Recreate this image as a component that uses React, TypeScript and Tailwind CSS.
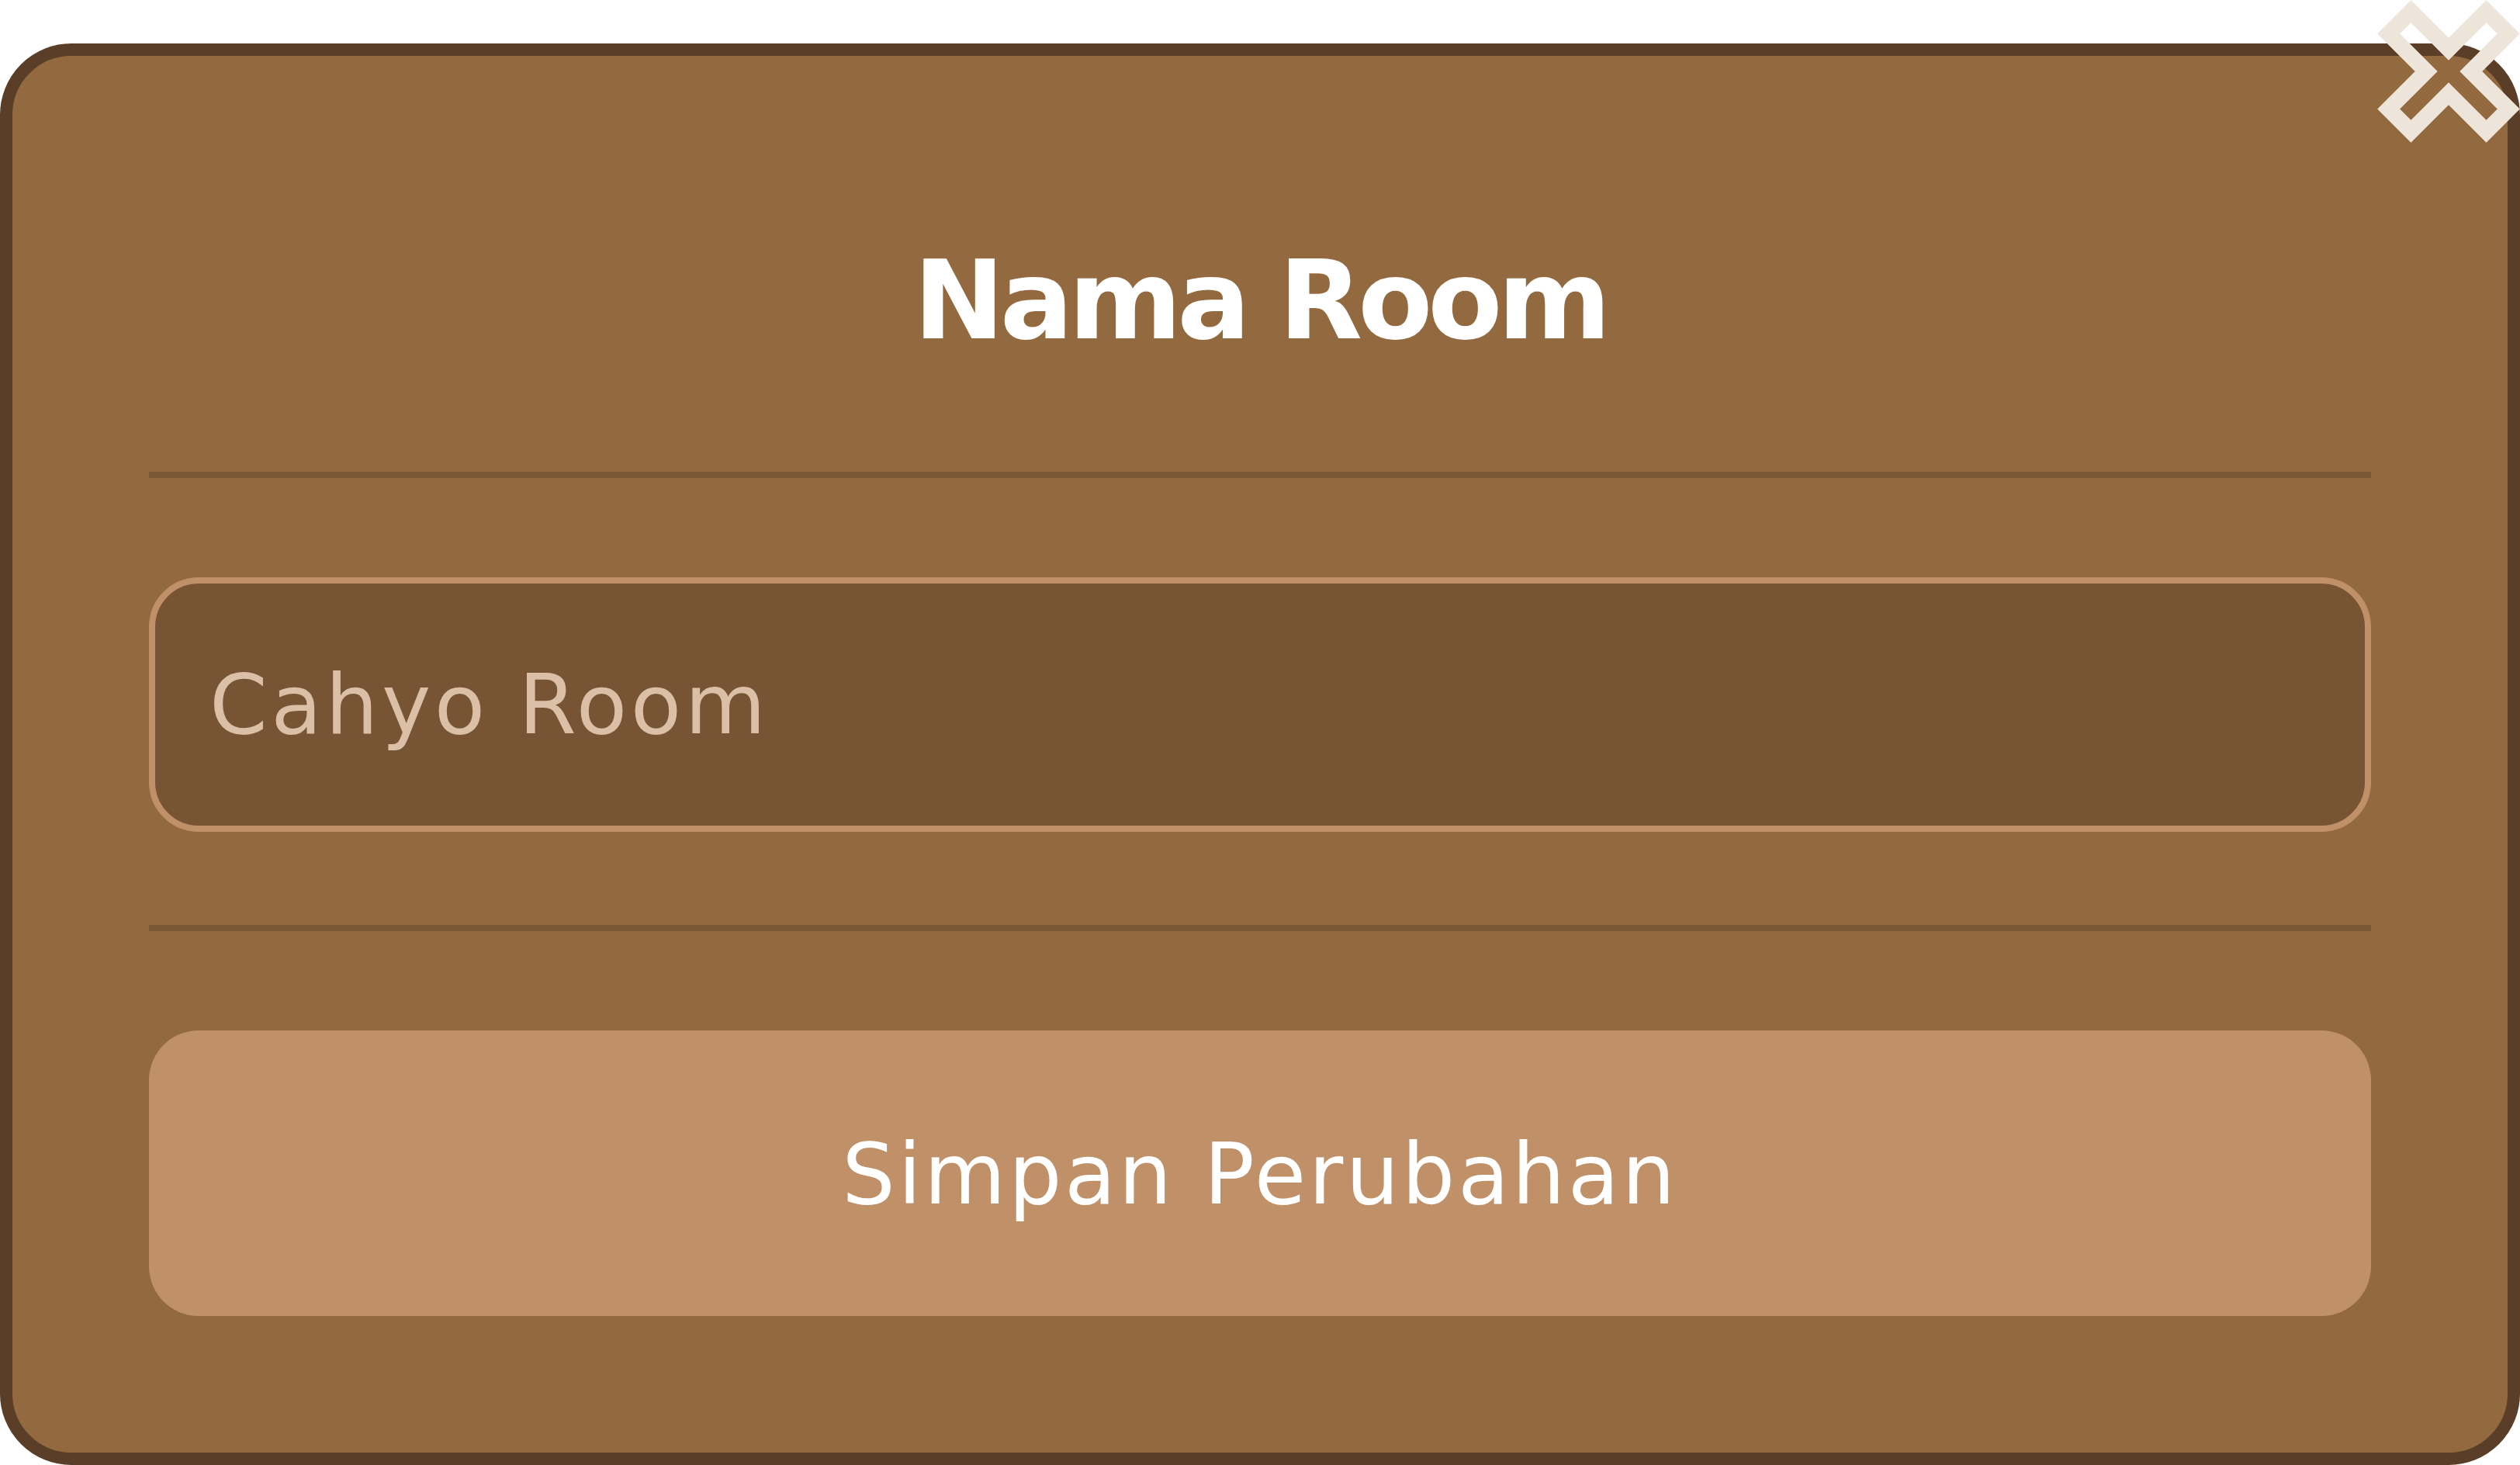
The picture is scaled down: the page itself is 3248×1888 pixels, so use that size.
import React from "react";

function CloseIcon() {
  return (
    <svg viewBox="0 0 184 184" className="w-[184px] h-[184px]">
      <polygon
        points="92,63.22 140.54,14.68 169.32,43.46 120.78,92 169.32,140.54 140.54,169.32 92,120.78 43.46,169.32 14.68,140.54 63.22,92 14.68,43.46 43.46,14.68"
        fill="none"
        stroke="#ede4da"
        strokeWidth={20.5}
        strokeLinejoin="miter"
      />
    </svg>
  );
}

export default function App() {
  return (
    <div className="relative w-[3248px] h-[1888px] bg-white pt-[56px] font-['DejaVu_Sans',sans-serif]">
      {/* Modal */}
      <div className="h-[1832px] rounded-[92px] border-[16px] border-[#5a3e27] bg-[#93693f] px-[176px] flex flex-col">
        <div className="h-[536px] pt-[246px] flex justify-center">
          <h1 className="text-[140px] leading-none font-bold text-white tracking-[-6px]">Nama Room</h1>
        </div>
        <div className="h-[8px] bg-[#785636]" />
        <input
          defaultValue="Cahyo Room"
          className="mt-[128px] h-[328px] w-full rounded-[64px] border-[8px] border-[#c09068] bg-[#765434] pl-[70px] text-[107px] tracking-[4.6px] text-[#dbbfa6] outline-none"
        />
        <div className="mt-[120px] h-[8px] bg-[#785636]" />
        <button className="mt-[128px] h-[368px] w-full rounded-[64px] bg-[#c09168] pt-[4px] text-[108px] leading-none tracking-[3.6px] text-white">
          Simpan Perubahan
        </button>
      </div>

      {/* Close button */}
      <button className="absolute right-0 top-0">
        <CloseIcon />
      </button>
    </div>
  );
}
